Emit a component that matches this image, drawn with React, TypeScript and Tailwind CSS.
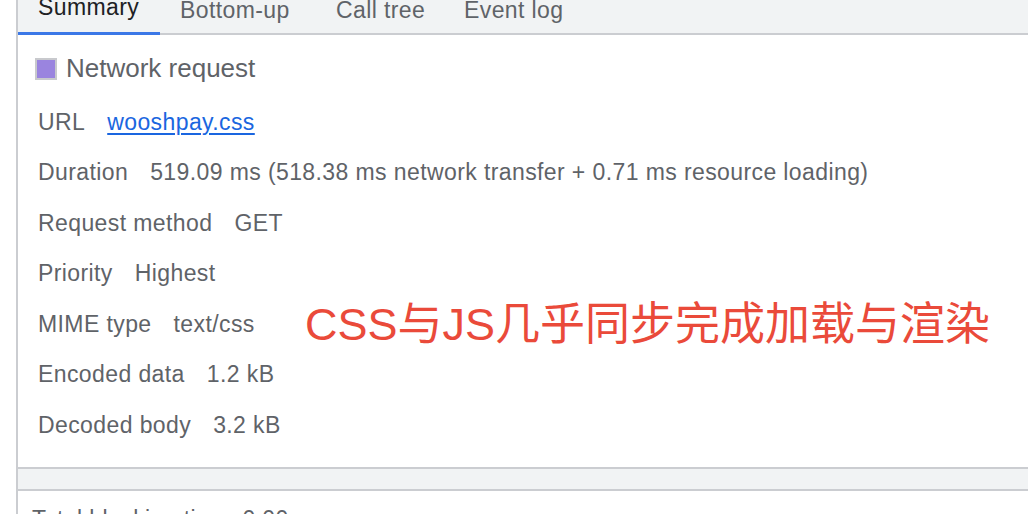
import React from 'react';

const tabs = [
  { label: 'Summary', w: 'w-[142px]', active: true },
  { label: 'Bottom-up', w: 'w-[156px]' },
  { label: 'Call tree', w: 'w-[128px]' },
  { label: 'Event log', w: 'w-[140px]' },
];

const rows: { label: string; value: React.ReactNode }[] = [
  {
    label: 'URL',
    value: <span className="text-[#1a66e0] underline underline-offset-[3px] decoration-[1.5px]">wooshpay.css</span>,
  },
  { label: 'Duration', value: '519.09 ms (518.38 ms network transfer + 0.71 ms resource loading)' },
  { label: 'Request method', value: 'GET' },
  { label: 'Priority', value: 'Highest' },
  { label: 'MIME type', value: 'text/css' },
  { label: 'Encoded data', value: '1.2 kB' },
  { label: 'Decoded body', value: '3.2 kB' },
];

export default function App() {
  return (
    <div
      className="w-[1028px] h-[514px] overflow-hidden bg-white"
      style={{ fontFamily: '"Liberation Sans", Arial, sans-serif' }}
    >
      <div className="ml-[16px] h-full border-l-2 border-[#cbcdd1] flex flex-col">
        {/* Tabs */}
        <div className="h-[35px] shrink-0 bg-[#f1f3f4] border-b-2 border-[#cbcdd1] flex">
          {tabs.map((t) => (
            <div
              key={t.label}
              className={`${t.w} h-[35px] -mb-[2px] flex items-end pl-[20px] pb-[12px] text-[23px] tracking-[0.4px] leading-[25px] ${
                t.active ? 'text-[#202124] border-b-[3px] border-[#3b78e7]' : 'text-[#5f6368]'
              }`}
            >
              {t.label}
            </div>
          ))}
        </div>

        {/* Details */}
        <div className="h-[432px] shrink-0 relative">
          <div className="mt-[22px] h-[23px] pl-[17px] flex items-center gap-[9px]">
            <span className="w-[22px] h-[22px] bg-[#9a84df] border-2 border-[#c8c9cd]" />
            <span className="text-[26px] leading-[23px] text-[#5f6368]">Network request</span>
          </div>
          <div className="mt-[17px] pl-[20px] flex flex-col">
            {rows.map((r) => (
              <div
                key={r.label}
                className="h-[50.5px] flex items-center text-[23px] tracking-[0.4px] leading-[25px] text-[#5f6368]"
              >
                <span className="mr-[22px]">{r.label}</span>
                <span>{r.value}</span>
              </div>
            ))}
          </div>
          {/* annotation overlay */}
          <div
            className="absolute left-[287px] top-[265px] text-[45px] leading-[50px] text-[#ea4a3a] whitespace-nowrap"
            style={{ fontFamily: '"Liberation Sans", "Noto Sans CJK SC", sans-serif' }}
          >
            CSS与JS几乎同步完成加载与渲染
          </div>
        </div>

        <div className="h-[20px] shrink-0 bg-[#f1f3f4] border-y-2 border-[#cbcdd1] box-content" />
        <div className="pl-[14px] pt-[16px] text-[23px] tracking-[0.4px] leading-[25px] text-[#5f6368] whitespace-nowrap">
          Total blocking time&nbsp;&nbsp;0.00 ms
        </div>
      </div>
    </div>
  );
}
